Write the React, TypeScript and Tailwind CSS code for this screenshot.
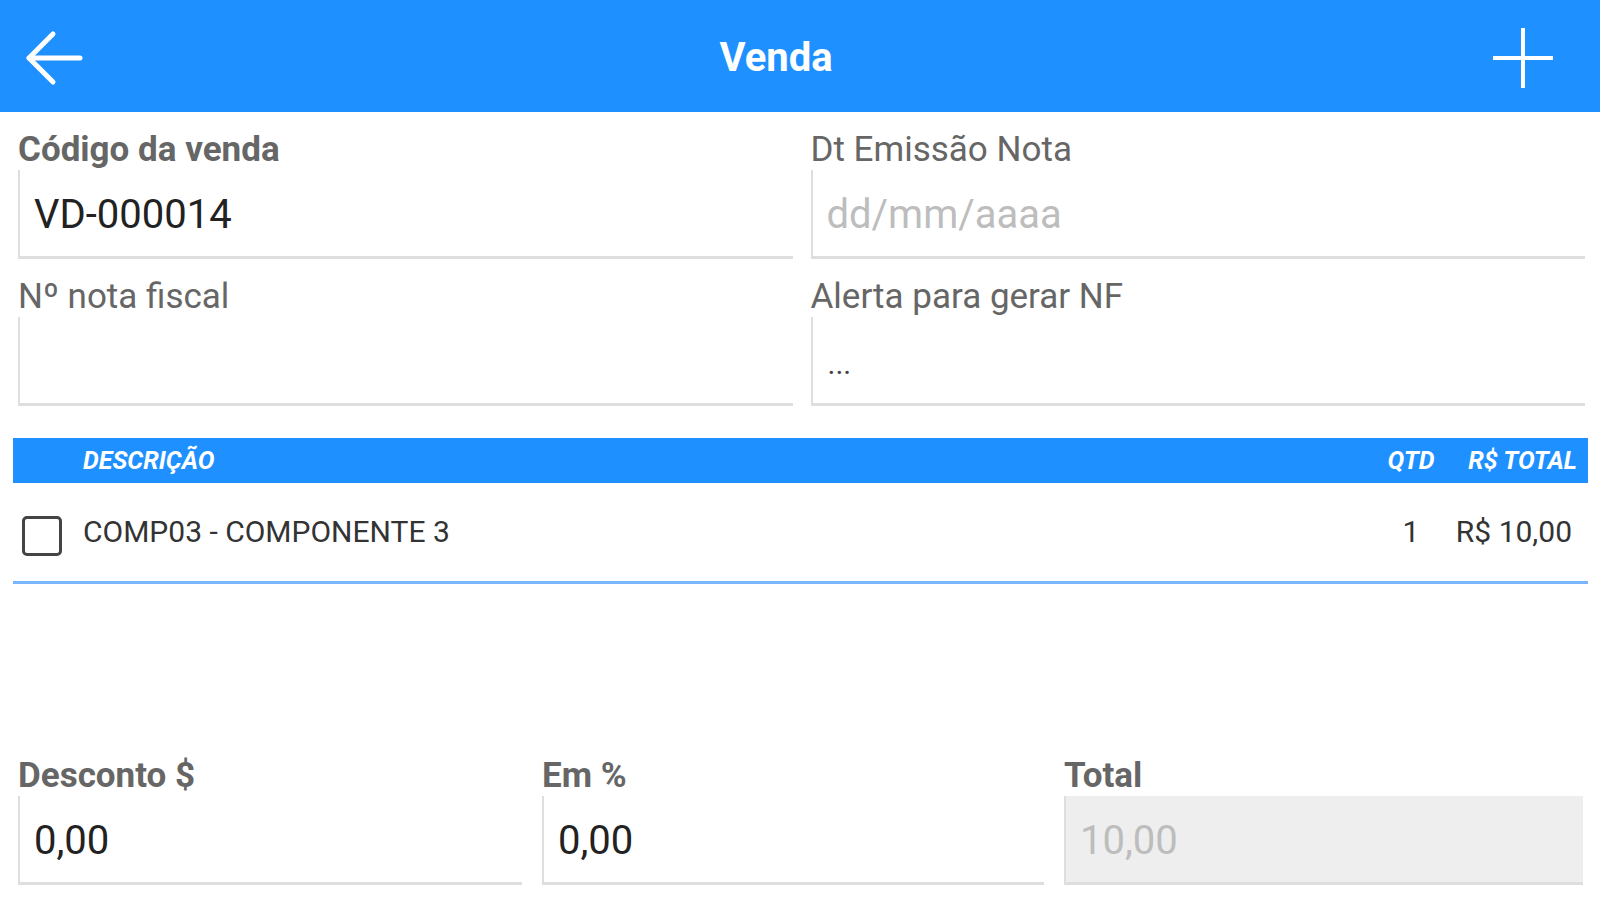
const font = { fontFamily: "Roboto, 'Liberation Sans', sans-serif" };

function Field({
  label,
  bold,
  value,
  placeholder,
  disabled,
}: {
  label: string;
  bold?: boolean;
  value?: string;
  placeholder?: string;
  disabled?: boolean;
}) {
  return (
    <div className="flex flex-col">
      <div
        className={`h-[42px] flex items-center text-[35px] leading-none text-[#666666] ${
          bold ? "font-bold" : "font-normal"
        }`}
      >
        {label}
      </div>
      <div
        className={`h-[89px] flex items-center pl-[14px] pt-[4px] border-l-2 border-b-[3px] border-[#dedede] text-[40px] leading-none ${
          disabled ? "bg-[#eeeeee] text-[#bdbdbd]" : "bg-white text-[#222222]"
        }`}
      >
        {value ? value : <span className="text-[#bdbdbd]">{placeholder}</span>}
      </div>
    </div>
  );
}

export default function App() {
  return (
    <div className="h-screen w-full flex flex-col bg-white" style={font}>
      {/* Top bar */}
      <header className="h-[112px] shrink-0 bg-[#1e90ff] flex items-center">
        <div className="w-[100px] h-full flex items-center pl-[25px] pt-[3px]">
          <svg width="58" height="56" viewBox="0 0 58 56" fill="none" stroke="white" strokeWidth="5" strokeLinecap="round" strokeLinejoin="round">
            <path d="M55 28H4" />
            <path d="M28 4L4 28L28 52" />
          </svg>
        </div>
        <h1 className="flex-1 text-center text-white font-bold text-[40px] leading-none pt-[3px]">Venda</h1>
        <div className="w-[148px] h-full flex items-center justify-center pr-[6px] pt-[3px]">
          <svg width="60" height="60" viewBox="0 0 60 60" fill="none" stroke="white" strokeWidth="4">
            <path d="M30 0V60" />
            <path d="M0 30H60" />
          </svg>
        </div>
      </header>

      {/* Header fields */}
      <div className="grid grid-cols-2 gap-x-[18px] gap-y-[16px] pt-[16px] pl-[18px] pr-[15px]">
        <Field label="Código da venda" bold value="VD-000014" />
        <Field label="Dt Emissão Nota" placeholder="dd/mm/aaaa" />
        <Field label="Nº nota fiscal" />
        <div className="flex flex-col">
          <div className="h-[42px] flex items-center text-[35px] leading-none text-[#666666]">Alerta para gerar NF</div>
          <div className="h-[89px] flex items-center pl-[15px] pt-[8px] border-l-2 border-b-[3px] border-[#dedede] text-[30px] leading-none text-[#444444]">
            ...
          </div>
        </div>
      </div>

      {/* Items table */}
      <div className="mt-[32px] pl-[13px] pr-[12px]">
        <div className="h-[45px] bg-[#1e90ff] flex items-center text-white font-bold italic text-[25px] leading-none">
          <div className="w-[70px]" />
          <div className="flex-1">DESCRIÇÃO</div>
          <div className="w-[80px] text-center">QTD</div>
          <div className="w-[137px] text-right pr-[11px]">R$ TOTAL</div>
        </div>
        <div className="h-[101px] flex items-center border-b-[3px] border-[#79b6ff] text-[30px] leading-none text-[#333333]">
          <div className="w-[70px] flex items-center pl-[9px] pt-[8px]">
            <div className="w-[40px] h-[40px] rounded-[5px] border-[3px] border-[#444444]" />
          </div>
          <div className="flex-1">COMP03 - COMPONENTE 3</div>
          <div className="w-[80px] text-center">1</div>
          <div className="w-[137px] text-right pr-[16px]">R$ 10,00</div>
        </div>
      </div>

      {/* Totals */}
      <div className="mt-auto pb-[15px] pl-[18px] pr-[17px] grid grid-cols-[504px_502px_1fr] gap-x-[20px]">
        <Field label="Desconto $" bold value="0,00" />
        <Field label="Em %" bold value="0,00" />
        <Field label="Total" bold value="10,00" disabled />
      </div>
    </div>
  );
}
